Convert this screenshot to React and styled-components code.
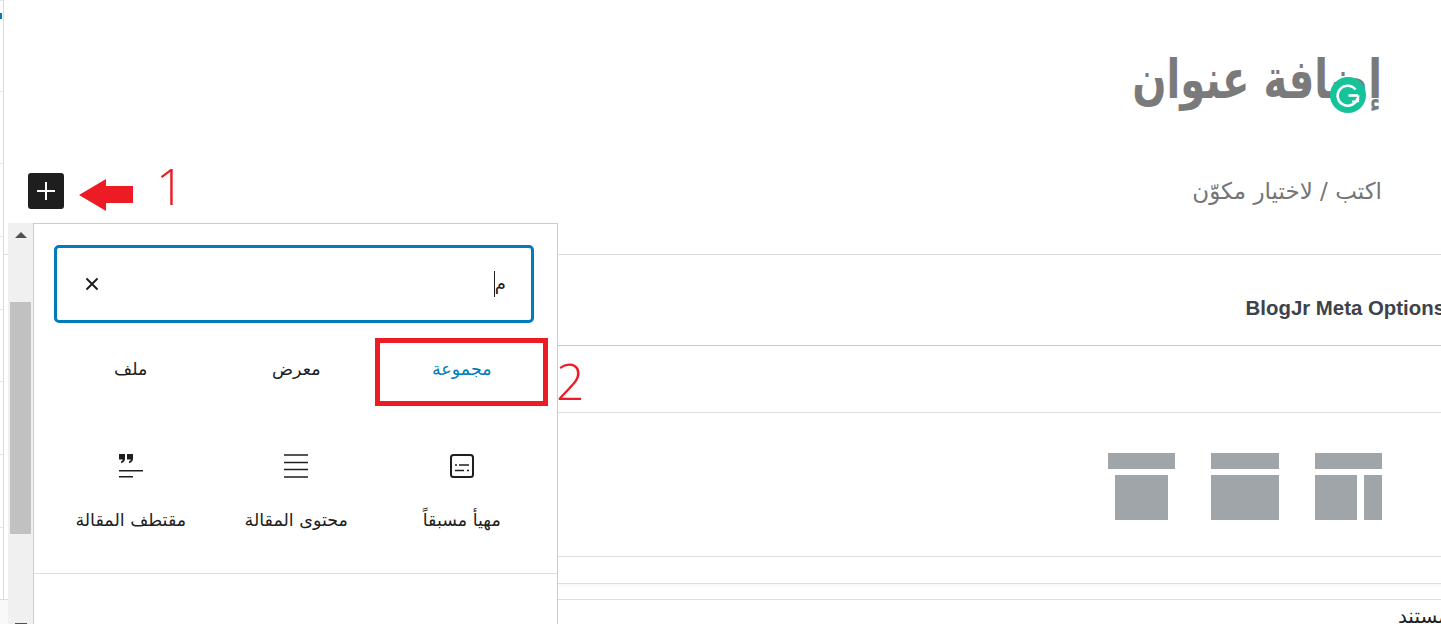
import styled, { createGlobalStyle } from "styled-components";

const GlobalStyle = createGlobalStyle`
  html, body {
    margin: 0;
    padding: 0;
    background: #fff;
    overflow: hidden;
  }
  * {
    box-sizing: border-box;
  }
`;

const arabicFont = `"DejaVu Sans", "Noto Sans", sans-serif`;

const tabs = [
  { label: "مجموعة", active: true },
  { label: "معرض" },
  { label: "ملف" },
];

const PresetIcon = () => (
  <svg width="24" height="24" viewBox="0 0 24 24" fill="none" stroke="#1e1e1e">
    <rect x="1" y="1" width="22" height="22" rx="2.5" strokeWidth="2" />
    <path d="M5 11h2M9 11h10M5 16.5h9M17 16.5h2" strokeWidth="1.6" />
  </svg>
);

const ContentIcon = () => (
  <svg width="24" height="24" viewBox="0 0 24 24" fill="none" stroke="#1e1e1e" strokeWidth="1.6">
    <path d="M0 1h24M0 8.5h24M0 15.5h24M0 23h24" />
  </svg>
);

const ExcerptIcon = () => (
  <svg width="24" height="24" viewBox="0 0 24 24" fill="#1e1e1e">
    <path d="M0 0h6v4.5C6 7 4.6 8.6 2 9.2V7.4c1-.3 1.6-.9 1.7-1.9H0zM8 0h6v4.5c0 2.5-1.4 4.1-4 4.7V7.4c1-.3 1.6-.9 1.7-1.9H8z" />
    <path d="M0 16h24v1.6H0zM0 22h14v1.6H0z" />
  </svg>
);

const blocks = [
  { label: "مهيأ مسبقاً", Icon: PresetIcon },
  { label: "محتوى المقالة", Icon: ContentIcon },
  { label: "مقتطف المقالة", Icon: ExcerptIcon },
];

const LayoutThumb = ({ width = 67, children }) => (
  <svg width={width} height="67" viewBox={`0 0 ${width} 67`} fill="#a0a5a9">
    <rect x="0" y="0" width={width} height="16" />
    {children}
  </svg>
);

const App = () => {
  return (
    <Page>
      <GlobalStyle />
      <AdminEdge>
        <ActiveMark />
      </AdminEdge>
      <Editor>
        <TitleRow>
          <PostTitle>إضافة عنوان</PostTitle>
        </TitleRow>
        <AppenderRow>
          <AddButton aria-label="add">
            <svg width="18" height="18" viewBox="0 0 18 18" stroke="#fff" strokeWidth="2">
              <path d="M9 0v18M0 9h18" />
            </svg>
          </AddButton>
          <Placeholder>اكتب / لاختيار مكوّن</Placeholder>
        </AppenderRow>
        <MetaSection>
          <MetaTitle>BlogJr Meta Options</MetaTitle>
        </MetaSection>
        <PlainSection />
        <LayoutSection>
          <LayoutThumb>
            <rect x="7" y="22" width="53" height="45" />
          </LayoutThumb>
          <LayoutThumb width={68}>
            <rect x="0" y="22" width="68" height="45" />
          </LayoutThumb>
          <LayoutThumb>
            <rect x="0" y="22" width="42" height="45" />
            <rect x="49" y="22" width="18" height="45" />
          </LayoutThumb>
        </LayoutSection>
        <ThinSection />
        <ShadowSection />
        <DocSection>
          <DocLabel>مستند</DocLabel>
        </DocSection>
      </Editor>

      <GrammarlyBadge>
        <svg width="36" height="36" viewBox="0 0 36 36" fill="none" stroke="#fff" strokeWidth="2.6">
          <path d="M25.5 12.5A10 10 0 1 0 27.4 21" />
          <path d="M18.5 18.5h9.5" />
          <path d="M22 24.5l6-.2.2-6" strokeWidth="2.2" />
        </svg>
      </GrammarlyBadge>

      <Inserter>
        <ScrollTrack>
          <ArrowUp />
          <ScrollThumb />
          <ArrowDown />
        </ScrollTrack>
        <Panel>
          <SearchField>
            <SearchText>م</SearchText>
            <Caret />
            <ClearIcon>
              <svg width="14" height="14" viewBox="0 0 14 14" stroke="#1e1e1e" strokeWidth="2">
                <path d="M1.5 1.5l11 11M12.5 1.5l-11 11" />
              </svg>
            </ClearIcon>
          </SearchField>
          <BlockGrid>
            {tabs.map((tab) => (
              <TabItem key={tab.label} $active={tab.active}>
                {tab.label}
              </TabItem>
            ))}
            {blocks.map(({ label, Icon }) => (
              <BlockItem key={label}>
                <Icon />
                <BlockLabel>{label}</BlockLabel>
              </BlockItem>
            ))}
          </BlockGrid>
          <PanelDivider />
        </Panel>
      </Inserter>

      <RedArrow>
        <svg width="54" height="32" viewBox="0 0 54 32" fill="#ed1c24">
          <path d="M0 16L27 0v7h27v17H27v8z" />
        </svg>
      </RedArrow>
      <StepNumberOne>1</StepNumberOne>
      <RedBox />
      <StepNumberTwo>2</StepNumberTwo>
    </Page>
  );
};

export default App;

const Page = styled.div`
  position: relative;
  display: flex;
  width: 1441px;
  height: 624px;
  overflow: hidden;
  background: #fff;
`;

const AdminEdge = styled.div`
  position: relative;
  flex: 0 0 4px;
  height: 600px;
  border-right: 1px solid #dcdcdc;
  background: repeating-linear-gradient(
    to bottom,
    transparent 0,
    transparent 71.7px,
    #e6e6e6 71.7px,
    #e6e6e6 72.7px
  );
  background-position: 0 19px;
`;

const ActiveMark = styled.div`
  width: 2px;
  height: 6px;
  margin-top: 13px;
  background: #007cba;
`;

const Editor = styled.main`
  flex: 1;
  min-width: 0;
  display: flex;
  flex-direction: column;
  & > * {
    flex-shrink: 0;
  }
`;

const TitleRow = styled.div`
  height: 173px;
  padding: 44px 59px 0 0;
  text-align: right;
`;

const PostTitle = styled.h1`
  margin: 0;
  font-family: ${arabicFont};
  font-size: 54px;
  line-height: 72px;
  font-weight: 700;
  color: #7a7a7a;
  transform: scaleX(0.745);
  transform-origin: right center;
`;

const AppenderRow = styled.div`
  display: flex;
  align-items: center;
  justify-content: space-between;
  height: 81px;
  padding: 0 59px 45px 24px;
`;

const AddButton = styled.button`
  display: flex;
  align-items: center;
  justify-content: center;
  width: 36px;
  height: 36px;
  padding: 0;
  border: 0;
  border-radius: 3px;
  background: #1e1e1e;
`;

const Placeholder = styled.div`
  font-family: ${arabicFont};
  font-size: 23px;
  line-height: 36px;
  color: #757575;
`;

const MetaSection = styled.section`
  display: flex;
  justify-content: flex-end;
  align-items: center;
  height: 91px;
  padding-top: 16px;
  border-top: 1px solid #dddddd;
`;

const MetaTitle = styled.h2`
  margin: 0 -4px 0 0;
  font-family: "Liberation Sans", Arial, sans-serif;
  font-size: 20.4px;
  font-weight: 700;
  white-space: nowrap;
  color: #3c434a;
`;

const PlainSection = styled.section`
  height: 67px;
  margin-left: 4px;
  border-top: 1px solid #c8c8c8;
`;

const LayoutSection = styled.section`
  display: flex;
  justify-content: flex-end;
  gap: 36px;
  height: 144px;
  margin-left: 4px;
  padding: 40px 59px 0 0;
  border-top: 1px solid #dddddd;
`;

const ThinSection = styled.section`
  height: 27px;
  margin-left: 4px;
  border-top: 1px solid #dddddd;
`;

const ShadowSection = styled.section`
  height: 16px;
  margin-left: 4px;
  border-top: 1px solid #dddddd;
  background: linear-gradient(to bottom, #f8f8f8, #fff 4px);
`;

const DocSection = styled.section`
  display: flex;
  justify-content: flex-end;
  flex: 1 1 0;
  min-height: 0;
  overflow: hidden;
  margin-left: -4px;
  border-top: 1px solid #dddddd;
  background: linear-gradient(to right, #f9f9f9 8px, #fff 8px);
`;

const DocLabel = styled.div`
  margin: 2px -8px 0 0;
  font-family: ${arabicFont};
  font-size: 20px;
  line-height: 28px;
  color: #1e1e1e;
  white-space: nowrap;
`;

const GrammarlyBadge = styled.div`
  position: absolute;
  left: 1330px;
  top: 77px;
  width: 36px;
  height: 36px;
  border-radius: 50%;
  background: #15c39a;
`;

const Inserter = styled.div`
  position: absolute;
  left: 8px;
  top: 223px;
  bottom: 0;
  width: 550px;
  display: flex;
`;

const ScrollTrack = styled.div`
  position: relative;
  flex: 0 0 25px;
  background: #f0f0f0;
  display: flex;
  flex-direction: column;
  align-items: center;
`;

const ArrowUp = styled.div`
  width: 0;
  height: 0;
  margin-top: 9px;
  border-left: 6px solid transparent;
  border-right: 6px solid transparent;
  border-bottom: 6px solid #505050;
`;

const ScrollThumb = styled.div`
  width: 21px;
  height: 232px;
  margin-top: 64px;
  background: #c1c1c1;
`;

const ArrowDown = styled.div`
  width: 12px;
  height: 1px;
  margin-top: 89px;
  background: #505050;
`;

const Panel = styled.div`
  flex: 1;
  padding: 21px 0 0;
  background: #fff;
  border-top: 1px solid #cccccc;
  border-left: 1px solid #cccccc;
  border-right: 1px solid #cccccc;
`;

const SearchField = styled.div`
  display: flex;
  align-items: center;
  direction: rtl;
  width: 480px;
  height: 78px;
  margin-left: 20px;
  padding: 0 25px 0 28px;
  border: 3px solid #007cba;
  border-radius: 5px;
`;

const SearchText = styled.span`
  font-family: ${arabicFont};
  font-size: 18px;
  line-height: 26px;
  color: #1e1e1e;
`;

const Caret = styled.span`
  width: 1px;
  height: 26px;
  background: #1e1e1e;
`;

const ClearIcon = styled.span`
  display: flex;
  margin-right: auto;
`;

const BlockGrid = styled.div`
  display: grid;
  direction: rtl;
  grid-template-columns: repeat(3, 165.5px);
  width: 496.5px;
  margin: 15px 0 0 14px;
`;

const TabItem = styled.div`
  height: 68px;
  padding-top: 21px;
  text-align: center;
  font-family: ${arabicFont};
  font-size: 17.5px;
  line-height: 20px;
  color: ${(props) => (props.$active ? "#007cba" : "#1e1e1e")};
`;

const BlockItem = styled.div`
  display: flex;
  flex-direction: column;
  align-items: center;
  gap: 32px;
  padding-top: 48px;
`;

const BlockLabel = styled.div`
  font-family: ${arabicFont};
  font-size: 17.5px;
  line-height: 20px;
  color: #1e1e1e;
  white-space: nowrap;
`;

const PanelDivider = styled.div`
  height: 1px;
  margin-top: 43px;
  background: #dddddd;
`;

const RedArrow = styled.div`
  position: absolute;
  left: 79px;
  top: 179px;
  line-height: 0;
`;

const StepNumber = styled.div`
  position: absolute;
  font-family: "Open Sans", sans-serif;
  font-weight: 300;
  font-size: 50px;
  line-height: 60px;
  color: #ed1c24;
`;

const StepNumberOne = styled(StepNumber)`
  left: 156px;
  top: 156px;
`;

const StepNumberTwo = styled(StepNumber)`
  left: 556px;
  top: 351px;
`;

const RedBox = styled.div`
  position: absolute;
  left: 375px;
  top: 338px;
  width: 173px;
  height: 68px;
  border: 5px solid #ed1c24;
`;
